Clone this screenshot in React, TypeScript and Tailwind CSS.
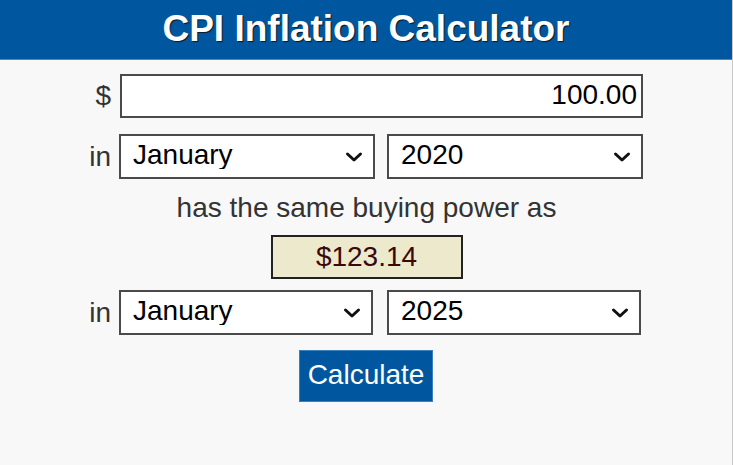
import { useState } from 'react'

const months = ['January', 'February', 'March', 'April', 'May', 'June', 'July', 'August', 'September', 'October', 'November', 'December']
const years = Array.from({ length: 113 }, (_, i) => String(1913 + i))

function Chevron() {
  return (
    <svg
      className="pointer-events-none absolute right-[12px] top-1/2 -translate-y-1/2"
      width="18"
      height="11"
      viewBox="0 0 18 11"
      fill="none"
    >
      <path d="M2.5 2.5l6.5 6 6.5-6" stroke="#111" strokeWidth="3" strokeLinecap="round" strokeLinejoin="round" />
    </svg>
  )
}

function Picker({ value, options, className }: { value: string; options: string[]; className: string }) {
  const [v, setV] = useState(value)
  return (
    <div className={`relative ${className}`}>
      <select
        value={v}
        onChange={(e) => setV(e.target.value)}
        className="h-full w-full appearance-none border-2 border-[#4a4a4a] bg-white pb-[3px] pl-[12px] text-[28px] leading-none text-black outline-none"
      >
        {options.map((o) => (
          <option key={o}>{o}</option>
        ))}
      </select>
      <Chevron />
    </div>
  )
}

export default function App() {
  const [amount, setAmount] = useState('100.00')

  return (
    <div className="min-h-screen w-[733px] border-r border-[#c9c9c9] bg-[#f8f8f8] font-['Liberation_Sans',Arial,sans-serif] text-[#333]">
      <div className="flex h-[60px] items-center justify-center border-b border-[#4b8bc5] bg-[#00579f]">
        <h1 className="-mt-[2px] text-[37px] font-bold text-white [text-shadow:1px_1px_1px_#0b1a2b]">CPI Inflation Calculator</h1>
      </div>

      <div className="flex flex-col pt-[14px]">
        {/* amount */}
        <div className="flex items-center">
          <span className="w-[111px] text-right text-[28px]">$</span>
          <input
            value={amount}
            onChange={(e) => setAmount(e.target.value)}
            className="ml-[9px] h-[44px] w-[523px] border-2 border-[#4a4a4a] bg-white pb-[2px] pr-[4px] text-right text-[28px] text-black outline-none"
          />
        </div>

        {/* from */}
        <div className="mt-[16px] flex items-center">
          <span className="w-[111px] text-right text-[28px]">in</span>
          <Picker value="January" options={months} className="ml-[8px] h-[45px] w-[256px]" />
          <Picker value="2020" options={years} className="ml-[12px] h-[45px] w-[256px]" />
        </div>

        <p className="mt-[13px] pl-[1px] text-center text-[28px] leading-[32px]">has the same buying power as</p>

        <div className="mt-[11px] flex justify-center">
          <div className="ml-[1px] flex h-[44px] w-[192px] items-center justify-center border-2 border-[#222] bg-[#ede9cd] text-[28px] text-[#3a0808]">
            $123.14
          </div>
        </div>

        {/* to */}
        <div className="mt-[11px] flex items-center">
          <span className="w-[111px] text-right text-[28px]">in</span>
          <Picker value="January" options={months} className="ml-[8px] h-[45px] w-[254px]" />
          <Picker value="2025" options={years} className="ml-[14px] h-[45px] w-[254px]" />
        </div>

        <div className="mt-[15px] flex justify-center">
          <button className="h-[52px] w-[134px] border border-[#3d7fbe] bg-[#00579f] pb-[3px] text-[28px] text-white">Calculate</button>
        </div>
      </div>
    </div>
  )
}
